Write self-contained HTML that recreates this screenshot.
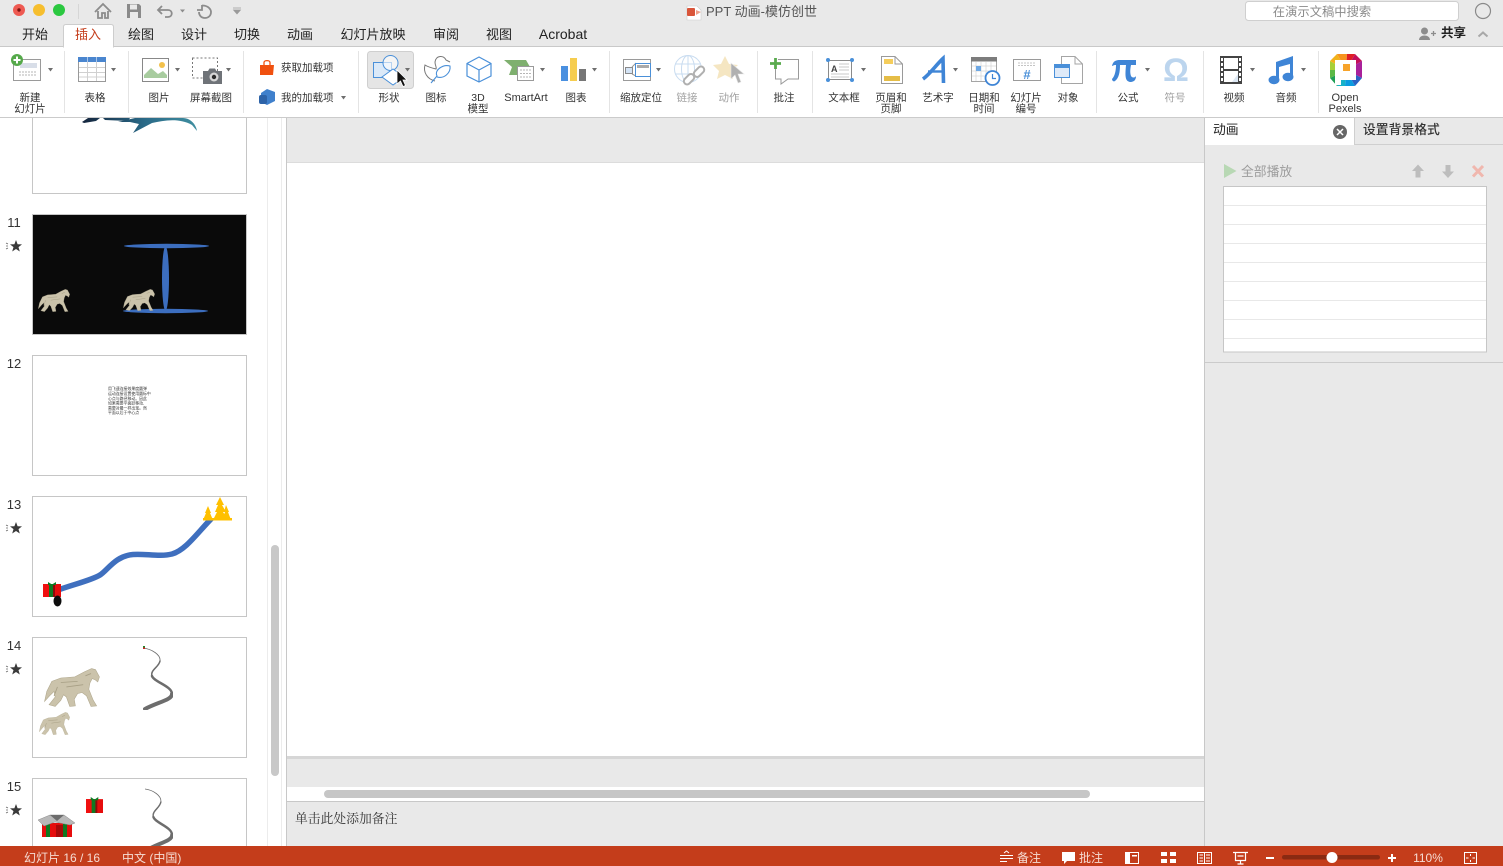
<!DOCTYPE html>
<html><head><meta charset="utf-8"><title>PPT 动画-模仿创世</title>
<style>
html,body{margin:0;padding:0;background:#e9e9e9;overflow:hidden}
svg{display:block;position:absolute;left:0;top:0}
text{font-family:"Liberation Sans","Noto Sans CJK SC",sans-serif;fill:#333}
.t{font-size:13px;fill:#222;text-anchor:middle}
.l{font-size:10.5px;text-anchor:middle;fill:#333}
.g{font-size:10.5px;text-anchor:middle;fill:#a0a0a0}
.n{font-size:13px;text-anchor:middle;fill:#333}
.s{font-size:12px;fill:#f6dcd3}
</style></head><body>
<svg width="1503" height="866" viewBox="0 0 1503 866" xmlns="http://www.w3.org/2000/svg">
<defs>
<symbol id="horse" viewBox="0 0 100 70" preserveAspectRatio="none">
<path d="M30 18L55 16L72 7L85 1L92 3L99 16L96 25L91 21L86 19L82 27L80 38L88 58L94 68L84 69L76 50L68 44L60 46L54 56L56 68L46 69L40 52L35 48L30 58L20 69L9 66L20 52L18 42L10 50L1 60L5 42L14 24Z" fill="#cbc3ab" stroke="#b0a88e" stroke-width="1"/>
<path d="M30 26L60 24M40 34L70 30M74 14L84 10M24 34L18 50" stroke="#a79f85" stroke-width="1.500" fill="none"/>
</symbol>
<symbol id="gift" viewBox="0 0 18 15" preserveAspectRatio="none">
<rect x="0" y="2" width="18" height="13" fill="#e60d0d"/>
<rect x="0" y="2" width="6" height="13" fill="#f01010"/>
<rect x="6" y="2" width="4" height="13" fill="#0f7a22"/>
<rect x="10" y="2" width="2" height="13" fill="#8c0a0a"/>
<path d="M5 0L9 2.500L13 0L13 3L5 3Z" fill="#0f7a22"/>
</symbol>
<symbol id="curve" viewBox="0 0 30 63" preserveAspectRatio="none">
<g fill="none" stroke="#6d6d6d" stroke-linecap="round">
<path d="M0 1C9 2 18 8 17 14" stroke-width=".8"/>
<path d="M17 14C16 20 7 23 9 29" stroke-width="1.500"/>
<path d="M9 29C11 35 29 39 29 47" stroke-width="2.500"/>
<path d="M29 47C29 53 15 55 2 62" stroke-width="4"/>
</g>
</symbol>
<clipPath id="c10"><rect x="33" y="118" width="213" height="75"/></clipPath>
<clipPath id="c15"><rect x="33" y="779" width="213" height="67"/></clipPath>
<linearGradient id="wh" x1="0" x2="1"><stop offset="0" stop-color="#14243c"/><stop offset=".55" stop-color="#2a6a88"/><stop offset="1" stop-color="#3f8ea0"/></linearGradient>
</defs>

<!-- chrome -->
<rect width="1503" height="866" fill="#e9e9e9"/>
<rect x="0" y="47" width="1503" height="70" fill="#fff"/>
<rect x="0" y="46" width="1503" height="1" fill="#c9c9c9"/>
<rect x="0" y="117" width="1503" height="1" fill="#cbcbcb"/>

<!-- traffic lights -->
<circle cx="19" cy="10" r="6" fill="#ee5a52"/><circle cx="19" cy="10" r="1.700" fill="#7c1410"/>
<circle cx="39" cy="10" r="6" fill="#f6be2e"/><circle cx="59" cy="10" r="6" fill="#2bc840"/>
<rect x="78" y="4" width="1" height="15" fill="#d6d6d6"/>

<!-- quick access -->
<path d="M95 12L103 4L111 12M98 11V18H102V13H105V18H108V11" fill="none" stroke="#8c8c8c" stroke-width="1.800"/>
<path d="M127 4H139L141 6V18H127Z" fill="#8a8a8a"/><rect x="130" y="4.500" width="7" height="5" fill="#e9e9e9"/><rect x="130" y="12" width="8" height="6" fill="#e9e9e9"/>
<path d="M162 6L158 10L162 14M158 10H168C173 10 173 17 168 17H165" fill="none" stroke="#8c8c8c" stroke-width="1.800"/>
<path d="M180 9.500H185L182.500 12.500Z" fill="#8c8c8c"/>
<path d="M208 5V10H213M208 5.500C201 5.500 199 10 199 12C199 16 202 18 205 18C209 18 211 15 211 12" fill="none" stroke="#8c8c8c" stroke-width="1.800" transform="matrix(-1 0 0 1 410 0)"/>
<path d="M233 8H241M233.500 10H240.500L237 14Z" fill="#9a9a9a" stroke="#9a9a9a" stroke-width=".7"/>

<!-- title -->
<path d="M687 6H697L701 10V20H687Z" fill="#fff" stroke="#ccc" stroke-width=".6"/><rect x="687" y="8" width="8" height="8" rx="1" fill="#d9553a"/><path d="M696 10L701 12L696 15Z" fill="#eea08c"/>
<text x="706" y="16" style="fill:#555;font-size:13px">PPT 动画-模仿创世</text>

<!-- search -->
<rect x="1245.500" y="1.500" width="213" height="19" rx="3" fill="#fff" stroke="#cfcfcf"/>
<text x="1322" y="16" text-anchor="middle" style="font-size:12.300px;fill:#8a8a8a">在演示文稿中搜索</text>
<circle cx="1483" cy="11" r="7.500" fill="none" stroke="#8a8a8a" stroke-width="1.200"/>

<!-- share -->
<circle cx="1424.500" cy="31" r="3.500" fill="#8c8c8c"/><path d="M1419 40C1419 34 1430 34 1430 40Z" fill="#8c8c8c"/>
<path d="M1431 33.500H1436M1433.500 31V36" stroke="#8c8c8c" stroke-width="1.300"/>
<text x="1441" y="37" style="font-size:12.500px;fill:#222;font-weight:bold">共享</text>
<path d="M1478.500 36.500L1483 32.500L1487.500 36.500" fill="none" stroke="#a8a8a8" stroke-width="2"/>

<!-- tabs -->
<path d="M63.500 47V27Q63.500 24.500 66 24.500H111Q113.500 24.500 113.500 27V47Z" fill="#fff" stroke="#cdcdcd"/>
<rect x="64" y="45" width="49" height="3" fill="#fff"/>
<text class="t" x="35" y="39">开始</text>
<text class="t" x="88" y="39" style="fill:#c43e1c">插入</text>
<text class="t" x="141" y="39">绘图</text>
<text class="t" x="194" y="39">设计</text>
<text class="t" x="247" y="39">切换</text>
<text class="t" x="300" y="39">动画</text>
<text class="t" x="373" y="39">幻灯片放映</text>
<text class="t" x="446" y="39">审阅</text>
<text class="t" x="499" y="39">视图</text>
<text class="t" x="563" y="39" style="font-size:14px">Acrobat</text>

<!-- ribbon separators -->
<g fill="#e4e4e4">
<rect x="64" y="51" width="1" height="62"/><rect x="128" y="51" width="1" height="62"/><rect x="243" y="51" width="1" height="62"/><rect x="358" y="51" width="1" height="62"/><rect x="609" y="51" width="1" height="62"/><rect x="757" y="51" width="1" height="62"/><rect x="812" y="51" width="1" height="62"/><rect x="1096" y="51" width="1" height="62"/><rect x="1203" y="51" width="1" height="62"/><rect x="1318" y="51" width="1" height="62"/>
</g>

<!-- dropdown arrows -->
<g fill="#6e6e6e">
<path d="M48 68H53L50.500 71.500Z"/><path d="M111 68H116L113.500 71.500Z"/><path d="M175 68H180L177.500 71.500Z"/><path d="M226 68H231L228.500 71.500Z"/><path d="M341 96H346L343.500 99.500Z"/>
<path d="M540 68H545L542.500 71.500Z"/><path d="M592 68H597L594.500 71.500Z"/><path d="M656 68H661L658.500 71.500Z"/><path d="M861 68H866L863.500 71.500Z"/><path d="M953 68H958L955.500 71.500Z"/><path d="M1145 68H1150L1147.500 71.500Z"/><path d="M1250 68H1255L1252.500 71.500Z"/><path d="M1301 68H1306L1303.500 71.500Z"/>
</g>

<!-- new slide -->
<rect x="13.500" y="59.500" width="27" height="21" fill="#fff" stroke="#9a9a9a"/>
<rect x="20" y="63" width="17" height="5" fill="#d8dee8"/>
<path d="M19 72H37M19 75H37" stroke="#b5b5b5" stroke-dasharray="2 1"/>
<circle cx="17" cy="60" r="6" fill="#55a94a"/><path d="M13.500 60H20.500M17 56.500V63.500" stroke="#fff" stroke-width="2"/>
<text class="l" x="30" y="101">新建</text><text class="l" x="30" y="112">幻灯片</text>

<!-- table -->
<rect x="78.500" y="57.500" width="27" height="24" fill="#fff" stroke="#999"/>
<rect x="78" y="57" width="28" height="5" fill="#4a86cf"/>
<path d="M87.500 62V81M96.500 62V81M79 67.500H105M79 72.500H105M79 77H105" stroke="#d0d0d0"/>
<path d="M87.500 57V62M96.500 57V62" stroke="#a9c6ea"/>
<text class="l" x="95" y="101">表格</text>

<!-- picture -->
<rect x="142.500" y="58.500" width="26" height="23" fill="#fff" stroke="#888"/>
<circle cx="162" cy="65" r="3" fill="#f3c14b"/>
<path d="M144 78V75L151 68L158 74L163 71L167 75V78Z" fill="#a8cc9f"/>
<text class="l" x="159" y="101">图片</text>

<!-- screenshot -->
<rect x="192.500" y="58" width="25" height="20" fill="none" stroke="#777" stroke-dasharray="2 2"/>
<path d="M203 71H208L209.500 68.500H215L216.500 71H222V84H203Z" fill="#6f7378"/>
<circle cx="214" cy="77" r="4.500" fill="#d6d6d6"/><circle cx="214" cy="77" r="2.200" fill="#2b2b2b"/>
<text class="l" x="211" y="101">屏幕截图</text>

<!-- add-ins -->
<path d="M260 65H274L273 75H260Z" fill="#f0500f"/><path d="M264 65V62.500C264 60 270 60 270 62.500V65" fill="none" stroke="#f0500f" stroke-width="1.300"/>
<text x="281" y="71" style="font-size:10.500px">获取加载项</text>
<path d="M267 89L275 92V101L267 105L261 102V93Z" fill="#3f80cc"/><rect x="259" y="95" width="8" height="9" rx="2" fill="#2d63a8"/>
<text x="281" y="101" style="font-size:10.500px">我的加载项</text>

<!-- shapes -->
<rect x="367.500" y="51.500" width="46" height="37" rx="3" fill="#e5e5e5" stroke="#cfcfcf"/>
<rect x="373.500" y="62.500" width="18" height="15" fill="#dbe9f8" stroke="#4a90d9"/>
<circle cx="390.500" cy="63" r="7.500" fill="#fff" fill-opacity=".6" stroke="#4a90d9"/>
<path d="M393 69L404 77L393 85L382 77Z" fill="#fff" stroke="#4a90d9"/>
<path d="M405 68H410L407.500 71.500Z" fill="#6e6e6e"/>
<path d="M397 70V84L400.500 81L403 86.500L405.500 85.500L403 80H407Z" fill="#111" stroke="#fff" stroke-width=".8"/>
<text class="l" x="389" y="101">形状</text>

<!-- icons (duck + leaf) -->
<path d="M450 62L446 60C444 55 436 55 435 62C435 66 437 67 436 69C432 68 428 67 425 65C423 72 427 79 435 81" fill="none" stroke="#777" stroke-width="1"/>
<path d="M431 83L437 76C434 70 443 64 450 66C451 73 444 79 437 77" fill="#fff" stroke="#4a90d9" stroke-width="1.100"/>
<text class="l" x="436" y="101">图标</text>

<!-- 3D -->
<path d="M479 57L491 63.500V76L479 82L467 76V63.500Z M467 63.500L479 70L491 63.500M479 70V82" fill="none" stroke="#4a90d9" stroke-width="1.200"/>
<text class="l" x="478" y="101">3D</text><text class="l" x="478" y="112">模型</text>

<!-- smartart -->
<path d="M504 60H526L530 67L526 75H509L512 67Z" fill="#7fb06f"/>
<rect x="517.500" y="66.500" width="16" height="14" fill="#fff" stroke="#9a9a9a"/>
<path d="M520 70H531M520 73.500H531M520 77H531" stroke="#b5b5b5" stroke-dasharray="2 1"/>
<text class="l" x="526" y="101" style="font-size:11px">SmartArt</text>

<!-- chart -->
<rect x="561" y="66" width="7" height="15" fill="#4a90e0"/><rect x="570" y="58" width="7" height="23" fill="#f6cd4f"/><rect x="579" y="69" width="7" height="12" fill="#767676"/>
<text class="l" x="576" y="101">图表</text>

<!-- zoom -->
<rect x="623.500" y="59.500" width="27" height="21" fill="#fff" stroke="#9a9a9a"/>
<rect x="625.500" y="67.500" width="7" height="6" fill="#d4e4f6" stroke="#8a8a8a"/>
<path d="M632 67L636 63M632 74L636 76" stroke="#9a9a9a"/>
<rect x="635.500" y="63.500" width="15" height="13" fill="#fff" stroke="#4a90d9"/><rect x="637" y="65" width="12" height="3" fill="#aaa"/>
<text class="l" x="641" y="101">缩放定位</text>

<!-- link -->
<g fill="none" stroke="#c9dcf0" stroke-width="1">
<circle cx="688" cy="69" r="13.500"/><ellipse cx="688" cy="69" rx="6.500" ry="13.500"/><path d="M675 64H701M675 74H701M688 55.500V82.500"/>
</g>
<rect x="693" y="68.500" width="12" height="6.500" rx="3.200" fill="#fff" stroke="#b0b0b0" stroke-width="2" transform="rotate(-45 699 71.700)"/>
<rect x="683" y="76" width="12" height="6.500" rx="3.200" fill="#fff" stroke="#b0b0b0" stroke-width="2" transform="rotate(-45 689 79.200)"/>
<text class="g" x="687" y="101">链接</text>

<!-- action -->
<path d="M725 56L729 64L738 65L731 71L733 79L725 75L717 79L719 71L713 65L721 64Z" fill="#f5e6c2"/>
<path d="M731 63V79L735 75L738 83L741 82L738 74H744Z" fill="#b0b0b0" stroke="#e8e8e8" stroke-width=".6"/>
<text class="g" x="729" y="101">动作</text>

<!-- comment -->
<path d="M778 59.500H798.500V79H788L781 84V79H775.500V65" fill="#fff" stroke="#9a9a9a"/>
<path d="M770 63.500H781M775.500 58V69" stroke="#5aab4e" stroke-width="2.800"/>
<text class="l" x="784" y="101">批注</text>

<!-- text box -->
<rect x="828.500" y="60.500" width="23" height="19" fill="#fff" stroke="#8a8a8a"/>
<text x="831" y="72" style="font-size:9px;font-weight:bold;fill:#444">A</text>
<path d="M839 64H849M839 67H849M839 70H849M831 74H849M831 77H849" stroke="#b8b8b8" stroke-width=".8"/>
<circle cx="828" cy="60" r="2" fill="#4a90d9"/><circle cx="852" cy="60" r="2" fill="#4a90d9"/><circle cx="828" cy="80" r="2" fill="#4a90d9"/><circle cx="852" cy="80" r="2" fill="#4a90d9"/>
<text class="l" x="844" y="101">文本框</text>

<!-- header -->
<path d="M881.500 56.500H895L902.500 64V83.500H881.500Z" fill="#fff" stroke="#9a9a9a"/><path d="M895 56.500V64H902.500" fill="none" stroke="#9a9a9a"/>
<rect x="884" y="59" width="9" height="5" fill="#f5cd5b"/><rect x="884" y="76" width="16" height="5" fill="#e5bd47"/>
<text class="l" x="891" y="101">页眉和</text><text class="l" x="891" y="112">页脚</text>

<!-- wordart -->
<path d="M923 79C930 74 936 65 943 58.500L943.500 83" fill="none" stroke="#3f85d6" stroke-width="3.600"/>
<path d="M928 71.500H944" fill="none" stroke="#3f85d6" stroke-width="2.400"/>
<text class="l" x="938" y="101">艺术字</text>

<!-- date -->
<rect x="971.500" y="57.500" width="25" height="24" fill="#fff" stroke="#a5a5a5"/><rect x="971" y="57" width="26" height="4.500" fill="#7c7c7c"/>
<path d="M976 62V81M981 62V81M986 62V81M991 62V81M972 66H996M972 71H996M972 76H996" stroke="#d6d6d6" stroke-width=".7"/>
<rect x="976" y="66" width="5" height="5" fill="#6ea8e4"/>
<circle cx="992.500" cy="78" r="7" fill="#fff" stroke="#3f85d6" stroke-width="1.800"/><path d="M992.500 74V78.500H996" fill="none" stroke="#3f85d6" stroke-width="1.200"/>
<text class="l" x="984" y="101">日期和</text><text class="l" x="984" y="112">时间</text>

<!-- number -->
<rect x="1013.500" y="59.500" width="27" height="21" fill="#fff" stroke="#9a9a9a"/>
<path d="M1018 63H1036M1018 65.500H1036" stroke="#c4c4c4" stroke-dasharray="2 1"/>
<text x="1027" y="79" text-anchor="middle" style="font-size:13px;fill:#4a90d9;font-weight:bold">#</text>
<text class="l" x="1026" y="101">幻灯片</text><text class="l" x="1026" y="112">编号</text>

<!-- object -->
<path d="M1061.500 56.500H1075L1082.500 64V83.500H1061.500Z" fill="#fff" stroke="#a5a5a5"/><path d="M1075 56.500V64H1082.500" fill="none" stroke="#a5a5a5"/>
<rect x="1054.500" y="64.500" width="15" height="13" fill="#dfeaf8" stroke="#4a90d9"/><rect x="1054" y="64" width="16" height="4" fill="#4a90d9"/>
<text class="l" x="1068" y="101">对象</text>

<!-- pi -->
<path d="M1112 66C1113 61 1116 60 1120 60H1136V65H1131C1130 70 1130 73 1131 76C1132 78 1135 78 1136 76C1136 81 1133 82 1130 82C1125 81 1125 76 1126 65H1120C1120 72 1119 78 1115 81C1114 82 1112 81 1112 79C1115 76 1116 70 1116 65C1113 65 1113 66 1112 66Z" fill="#3f85d6"/>
<text class="l" x="1128" y="101">公式</text>

<!-- omega -->
<text x="1176" y="81" text-anchor="middle" style="font-size:32px;font-weight:bold;fill:#bcd5ee">Ω</text>
<text class="g" x="1175" y="101">符号</text>

<!-- video -->
<rect x="1220" y="56" width="22" height="28" fill="#444"/>
<rect x="1224" y="58" width="14" height="11" fill="#fff"/><rect x="1224" y="71" width="14" height="11" fill="#fff"/><path d="M1232 82L1238 74V82Z" fill="#dde8f4"/>
<g fill="#fff"><rect x="1221" y="58" width="2" height="3"/><rect x="1221" y="63" width="2" height="3"/><rect x="1221" y="68" width="2" height="3"/><rect x="1221" y="73" width="2" height="3"/><rect x="1221" y="78" width="2" height="3"/><rect x="1239" y="58" width="2" height="3"/><rect x="1239" y="63" width="2" height="3"/><rect x="1239" y="68" width="2" height="3"/><rect x="1239" y="73" width="2" height="3"/><rect x="1239" y="78" width="2" height="3"/></g>
<text class="l" x="1234" y="101">视频</text>

<!-- audio -->
<path d="M1276 62L1293 56V78H1290V64L1279 67V81H1276Z" fill="#3f85d6"/>
<ellipse cx="1274" cy="80" rx="5.500" ry="4.200" fill="#3f85d6"/><ellipse cx="1288" cy="77" rx="5.500" ry="4.200" fill="#3f85d6"/>
<text class="l" x="1286" y="101">音频</text>

<!-- pexels logo -->
<g>
<path d="M1346 70L1337 54H1347Z" fill="#f7931e"/><path d="M1346 70L1347 54H1355Z" fill="#df1f26"/><path d="M1346 70L1355 54L1362 61Z" fill="#c3105a"/>
<path d="M1346 70L1362 61V78Z" fill="#a9209a"/><path d="M1346 70L1362 78L1355 86Z" fill="#2a63c4"/>
<path d="M1346 70L1355 86H1345Z" fill="#0a9be0"/><path d="M1346 70L1345 86H1337Z" fill="#17b2c9"/>
<path d="M1346 70L1337 86L1330 78Z" fill="#1f9f55"/><path d="M1346 70L1330 78V70Z" fill="#5cb947"/><path d="M1346 70L1330 70V61Z" fill="#a8cf38"/><path d="M1346 70L1330 61L1337 54Z" fill="#f2b21b"/>
<path d="M1335 60H1356V80H1341V85H1335Z" fill="#fff"/>
<rect x="1343" y="64" width="7" height="7" fill="#f7a32a"/>
</g>
<text class="l" x="1345" y="101" style="font-size:11px">Open</text><text class="l" x="1345" y="112" style="font-size:11px">Pexels</text>

<!-- left panel -->
<rect x="0" y="118" width="287" height="728" fill="#fff"/>
<rect x="267" y="118" width="1" height="728" fill="#ececec"/>
<rect x="281" y="118" width="1" height="728" fill="#ececec"/>
<rect x="286" y="118" width="1" height="728" fill="#c8c8c8"/>
<rect x="271" y="545" width="8" height="231" rx="4" fill="#c8c8c8"/>

<!-- slide 10 -->
<path d="M32.500 118V193.500H246.500V118" fill="#fff" stroke="#c6c6c6"/>
<g clip-path="url(#c10)">
<path d="M82 122L88 118H100L96 121L84 123ZM103 118H130L128 121L105 120ZM118 122L135 118H183C190 118 196 124 197 131L192 125C180 118 165 120 152 123L133 133L139 124L130 122Z" fill="url(#wh)"/>
</g>

<!-- slide 11 -->
<rect x="32.500" y="214.500" width="214" height="120" fill="#0a0a0a" stroke="#c6c6c6"/>
<ellipse cx="166.500" cy="246" rx="42.500" ry="2.200" fill="#3c6ebf"/>
<ellipse cx="165.500" cy="311" rx="42.500" ry="2.200" fill="#3c6ebf"/>
<ellipse cx="165.500" cy="278.500" rx="3.500" ry="32" fill="#3c6ebf"/>
<use href="#horse" x="38" y="289" width="32" height="23"/>
<use href="#horse" x="123" y="289" width="32" height="22"/>

<!-- slide 12 -->
<rect x="32.500" y="355.500" width="214" height="120" fill="#fff" stroke="#c6c6c6"/>
<text x="108" y="390" style="font-size:3.900px;fill:#333">用飞速连接效果度圆弹</text>
<text x="108" y="395" style="font-size:3.900px;fill:#333">运动连接设置使用圆标中</text>
<text x="108" y="400" style="font-size:3.900px;fill:#333">心点与路径移动。因此</text>
<text x="108" y="404.500" style="font-size:3.900px;fill:#333">如果需要平面跃移动,</text>
<text x="108" y="409.500" style="font-size:3.900px;fill:#333">需要对最一样出现。然</text>
<text x="108" y="414" style="font-size:3.900px;fill:#333">平面以后于中心点</text>

<!-- slide 13 -->
<rect x="32.500" y="496.500" width="214" height="120" fill="#fff" stroke="#c6c6c6"/>
<path d="M58 590C75 584 92 580 100 575C108 570 115 556 133 554.500C145 553.500 160 557 172 554C186 550 198 532 212 518" fill="none" stroke="#3f6fbe" stroke-width="5.500"/>
<use href="#gift" x="43" y="582" width="18" height="15"/>
<ellipse cx="57.500" cy="601" rx="4" ry="5.500" fill="#0c0c0c"/>
<g fill="#ffc000">
<path d="M220 497L224 505H222L226 512H223L228 520H213L217 512H215L218 505H216Z"/>
<path d="M208 506L211 513H210L213 520H203L206 513H205Z"/>
<path d="M226 505L229 512H228L231 520H222L225 512H224Z"/>
<rect x="203" y="518" width="29" height="2.500"/>
</g>

<!-- slide 14 -->
<rect x="32.500" y="637.500" width="214" height="120" fill="#fff" stroke="#c6c6c6"/>
<use href="#horse" x="44" y="668" width="56" height="39"/>
<use href="#horse" x="39" y="712" width="31" height="23"/>
<use href="#curve" x="143" y="647" width="30" height="63"/>
<rect x="143" y="646" width="2" height="1.500" fill="#1a8a2a"/><rect x="143" y="647.500" width="2" height="1.500" fill="#d62020"/>

<!-- slide 15 -->
<rect x="32.500" y="778.500" width="214" height="90" fill="#fff" stroke="#c6c6c6"/>
<g clip-path="url(#c15)">
<use href="#gift" x="86" y="797" width="17" height="16"/>
<rect x="42" y="823" width="30" height="14" fill="#e60d0d"/><rect x="46" y="823" width="4" height="14" fill="#0f7a22"/><rect x="63" y="823" width="4" height="14" fill="#0f7a22"/><rect x="56" y="825" width="7" height="12" fill="#a80a0a"/>
<path d="M38 820L50 815H64L75 823L70 825L55 822L44 826Z" fill="#b8b8b8" stroke="#8a8a8a" stroke-width=".5"/><path d="M50 815H64L57 821Z" fill="#6c6c6c"/>
<use href="#curve" x="145" y="788" width="28" height="63"/>
</g>

<!-- numbers + stars -->
<text class="n" x="14" y="227">11</text><text class="n" x="14" y="368">12</text><text class="n" x="14" y="509">13</text><text class="n" x="14" y="650">14</text><text class="n" x="14" y="791">15</text>
<g fill="#3a3a3a">
<path d="M16 240L17.600 244.300L22 244.400L18.500 247.100L19.800 251.500L16 249L12.200 251.500L13.500 247.100L10 244.400L14.400 244.300Z"/>
<path d="M16 522L17.600 526.300L22 526.400L18.500 529.100L19.800 533.500L16 531L12.200 533.500L13.500 529.100L10 526.400L14.400 526.300Z"/>
<path d="M16 663L17.600 667.300L22 667.400L18.500 670.100L19.800 674.500L16 672L12.200 674.500L13.500 670.100L10 667.400L14.400 667.300Z"/>
<path d="M16 804L17.600 808.300L22 808.400L18.500 811.100L19.800 815.500L16 813L12.200 815.500L13.500 811.100L10 808.400L14.400 808.300Z"/>
</g>
<g stroke="#666" stroke-width=".7" fill="none">
<path d="M6 243L8 244M6 246H8M6 249L8 248"/><path d="M6 525L8 526M6 528H8M6 531L8 530"/><path d="M6 666L8 667M6 669H8M6 672L8 671"/><path d="M6 807L8 808M6 810H8M6 813L8 812"/>
</g>

<!-- main -->
<rect x="287" y="162" width="917" height="1" fill="#dcdcdc"/>
<rect x="287" y="163" width="917" height="593" fill="#fff"/>
<rect x="287" y="756" width="917" height="3" fill="#d6d6d6"/>
<rect x="287" y="787" width="917" height="14" fill="#fff"/>
<rect x="324" y="790" width="766" height="8" rx="4" fill="#c6c6c6"/>
<rect x="287" y="801" width="917" height="1" fill="#c8c8c8"/>
<text x="295" y="823" style="font-family:'Liberation Serif','Noto Serif CJK SC',serif;font-size:12.800px;fill:#333">单击此处添加备注</text>

<!-- right panel -->
<rect x="1204" y="118" width="1" height="728" fill="#c8c8c8"/>
<rect x="1205" y="118" width="149" height="27" fill="#fff"/>
<rect x="1354" y="118" width="1" height="27" fill="#cfcfcf"/>
<rect x="1355" y="144" width="148" height="1" fill="#cfcfcf"/>
<text x="1213" y="134" style="font-size:12.800px;fill:#222">动画</text>
<circle cx="1340" cy="132" r="7" fill="#666"/><path d="M1337 129L1343 135M1343 129L1337 135" stroke="#fff" stroke-width="1.500"/>
<text x="1363" y="134" style="font-size:12.800px;fill:#333;font-weight:500">设置背景格式</text>
<path d="M1224 164L1236.500 171L1224 178Z" fill="#b8d8b4"/>
<text x="1241" y="176" style="font-size:12.800px;fill:#9c9c9c">全部播放</text>
<path d="M1418 164.500L1424 171H1420.500V177.500H1415.500V171H1412Z" fill="#bdbdbd"/>
<path d="M1448 178L1454 171.500H1450.500V165H1445.500V171.500H1442Z" fill="#bdbdbd"/>
<path d="M1473 166L1483 176.500M1483 166L1473 176.500" stroke="#f0b7ae" stroke-width="3"/>
<rect x="1223.500" y="186.500" width="263" height="165.500" fill="#fff" stroke="#c6c6c6"/>
<g fill="#e8e8e8"><rect x="1224" y="205" width="262" height="1"/><rect x="1224" y="224" width="262" height="1"/><rect x="1224" y="243" width="262" height="1"/><rect x="1224" y="262" width="262" height="1"/><rect x="1224" y="281" width="262" height="1"/><rect x="1224" y="300" width="262" height="1"/><rect x="1224" y="319" width="262" height="1"/><rect x="1224" y="338" width="262" height="1"/></g>
<rect x="1205" y="362" width="298" height="1" fill="#cbcbcb"/>

<!-- status bar -->
<rect x="0" y="846" width="1503" height="20" fill="#c43d1b"/>
<text class="s" x="24" y="862">幻灯片 16 / 16</text>
<text class="s" x="122" y="862">中文 (中国)</text>
<path d="M1000 855.500H1013M1000 858.500H1013M1000 861.500H1007M1004 853L1006.500 851L1009 853" stroke="#fff" fill="none"/>
<text class="s" x="1017" y="862">备注</text>
<path d="M1062 852H1075V861H1067L1064 864V861H1062Z" fill="#fff"/>
<text class="s" x="1079" y="862">批注</text>
<rect x="1125.500" y="852.500" width="13" height="11" fill="none" stroke="#fff"/><rect x="1125" y="852" width="5" height="12" fill="#fff"/><rect x="1132" y="855" width="5" height="1.500" fill="#fff"/>
<g fill="#fff"><rect x="1161" y="852" width="6" height="4"/><rect x="1170" y="852" width="6" height="4"/><rect x="1161" y="859" width="6" height="4"/><rect x="1170" y="859" width="6" height="4"/></g>
<path d="M1197.500 852.500H1211.500V863.500H1197.500ZM1204.500 852.500V863.500M1199.500 855H1203M1199.500 858H1203M1199.500 861H1203M1206 855H1210M1206 858H1210M1206 861H1210" fill="none" stroke="#fff"/>
<path d="M1233 852.500H1248M1235.500 853V860.500H1245.500V853M1240.500 860.500V864M1237.500 864H1243.500M1237.500 856H1243.500" fill="none" stroke="#fff" stroke-width="1.200"/>
<rect x="1266" y="857" width="8" height="2" fill="#fff"/>
<rect x="1282" y="855" width="98" height="4.500" rx="2.200" fill="#8a2a12"/>
<circle cx="1332" cy="857.500" r="5.500" fill="#fff"/>
<path d="M1388 858H1396M1392 854V862" stroke="#fff" stroke-width="2"/>
<text class="s" x="1428" y="862" text-anchor="middle">110%</text>
<rect x="1464.500" y="852.500" width="12" height="11" fill="none" stroke="#fff"/>
<path d="M1470.500 854V856M1470.500 860V862M1466 858H1468.500M1472.500 858H1475" stroke="#fff"/>
</svg>
</body></html>
